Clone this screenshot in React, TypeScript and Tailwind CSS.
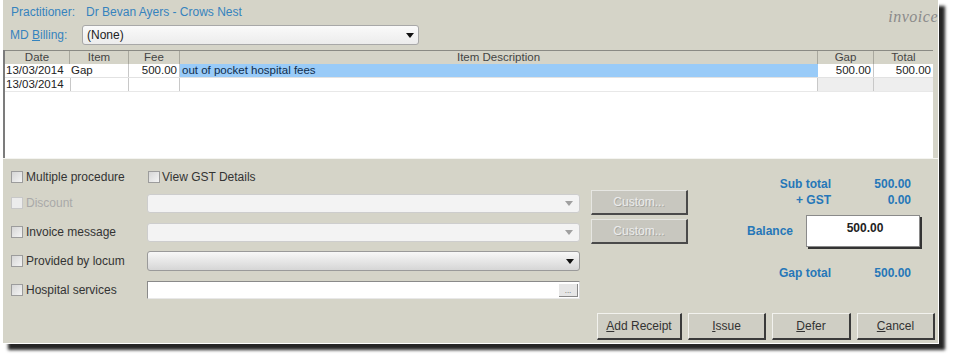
import React from "react";

function Check({ disabled = false }: { disabled?: boolean }) {
  return (
    <span
      className={
        disabled
          ? "inline-block w-[12px] h-[12px] border border-[#c8c8c8] bg-[#ececec] shrink-0"
          : "inline-block w-[12px] h-[12px] border border-[#9c9c9c] bg-gradient-to-br from-[#d6d6d6] to-[#f4f4f4] shrink-0"
      }
    />
  );
}

function Arrow({ dark = false }: { dark?: boolean }) {
  return (
    <svg width="8" height="5" viewBox="0 0 8 5" className="shrink-0">
      <path d="M0 0 L8 0 L4 5 Z" fill={dark ? "#111" : "#a0a0a0"} />
    </svg>
  );
}

function Btn({ children, w }: { children: React.ReactNode; w: string }) {
  return (
    <div
      className={
        "h-[27px] flex items-center justify-center bg-[#cfcec4] border-t border-l border-[#f2f2ee] border-r-2 border-b-2 border-r-[#3a3a3a] border-b-[#3a3a3a] text-[#333] text-[12px] " +
        w
      }
    >
      {children}
    </div>
  );
}

export default function App() {
  return (
    <div className="w-[953px] h-[360px] bg-white font-['Liberation_Sans',Arial,sans-serif] text-[12px] leading-none overflow-hidden">
      <div className="ml-[2px] w-[937px] h-[344px] bg-[#d5d4c8] border-x border-b border-white shadow-[6px_6px_3px_rgba(0,0,0,0.85)] flex flex-col">
        {/* header */}
        <div className="h-[24px] flex items-center pl-[8px]">
          <span className="text-[#3583be]">Practitioner:</span>
          <span className="ml-[11px] text-[#3583be]">Dr Bevan Ayers - Crows Nest</span>
          <span className="ml-auto mt-[10px] font-['Liberation_Serif',serif] italic text-[16px] text-[#8a8a8a] tracking-[0.5px]">
            invoice
          </span>
        </div>

        {/* MD Billing */}
        <div className="h-[26px] flex items-start pt-[1px]">
          <div className="w-[79px] pl-[7px] h-[20px] flex items-center text-[#3583be]">
            MD&nbsp;<span className="underline">B</span>illing:
          </div>
          <div className="w-[337px] h-[20px] rounded-[3px] border border-[#a8a8a8] bg-gradient-to-b from-[#fafafa] to-[#ececec] flex items-center pl-[4px] pr-[4px] text-[#222]">
            <span>(None)</span>
            <span className="ml-auto">
              <Arrow dark />
            </span>
          </div>
        </div>

        {/* Table */}
        <div className="h-[108px] w-[930px] border-l-2 border-[#7c7c7c] bg-white flex flex-col">
          <div className="h-[14px] flex bg-[#d5d4c8] border-t border-[#8a8a84] text-[#444] text-[11.5px]">
            <div className="w-[65px] border-r border-[#a9a89e] flex items-center justify-center">Date</div>
            <div className="w-[59px] border-r border-[#a9a89e] flex items-center justify-center">Item</div>
            <div className="w-[51px] border-r border-[#a9a89e] flex items-center justify-center">Fee</div>
            <div className="w-[638px] border-r border-[#a9a89e] flex items-center justify-center">Item Description</div>
            <div className="w-[56px] border-r border-[#a9a89e] flex items-center justify-center">Gap</div>
            <div className="w-[59px] flex items-center justify-center">Total</div>
          </div>
          <div className="h-[14px] flex text-[#222] text-[11.5px] border-b border-[#e2e2e2]">
            <div className="w-[65px] flex items-center pl-[1px] whitespace-nowrap">13/03/2014</div>
            <div className="w-[59px] border-r border-[#c8c8c8] flex items-center pl-[1px]">Gap</div>
            <div className="w-[51px] border-r border-[#c8c8c8] flex items-center justify-end pr-[2px]">500.00</div>
            <div className="w-[638px] bg-[#99cbf8] flex items-center pl-[2px] text-[#0f2d4d]">out of pocket hospital fees</div>
            <div className="w-[56px] border-r border-[#c8c8c8] flex items-center justify-end pr-[2px]">500.00</div>
            <div className="w-[59px] flex items-center justify-end pr-[2px]">500.00</div>
          </div>
          <div className="h-[14px] flex text-[#222] text-[11.5px] border-b border-[#e8e8e8]">
            <div className="w-[65px] flex items-center pl-[1px] whitespace-nowrap">13/03/2014</div>
            <div className="w-[59px] border-r border-l border-[#c8c8c8] flex items-center" />
            <div className="w-[51px] border-r border-[#c8c8c8]" />
            <div className="w-[638px] border-r border-[#c8c8c8]" />
            <div className="w-[56px] border-r border-[#c8c8c8] bg-[#eeeeee]" />
            <div className="w-[59px] bg-[#eeeeee]" />
          </div>
        </div>

        {/* bottom area */}
        <div className="h-[155px] flex border-t border-[#f4f4f0]">
          {/* left column */}
          <div className="w-[577px] pl-[8px] pt-[8px] flex flex-col text-[#333]">
            <div className="h-[20px] flex items-center">
              <div className="w-[137px] flex items-center gap-[3px]">
                <Check />
                <span>Multiple procedure</span>
              </div>
              <div className="flex items-center gap-[2px]">
                <Check />
                <span>View GST Details</span>
              </div>
            </div>
            <div className="h-[20px] mt-[6px] flex items-center">
              <div className="w-[136px] flex items-center gap-[3px] text-[#a9a9a9]">
                <Check disabled />
                <span>Discount</span>
              </div>
              <div className="w-[433px] h-[19px] rounded-[3px] border border-[#cdcdcd] bg-[#f3f3f3] flex items-center justify-end pr-[6px]">
                <Arrow />
              </div>
            </div>
            <div className="h-[20px] mt-[9px] flex items-center">
              <div className="w-[136px] flex items-center gap-[3px]">
                <Check />
                <span>Invoice message</span>
              </div>
              <div className="w-[433px] h-[19px] rounded-[3px] border border-[#cdcdcd] bg-[#f3f3f3] flex items-center justify-end pr-[6px]">
                <Arrow />
              </div>
            </div>
            <div className="h-[20px] mt-[9px] flex items-center">
              <div className="w-[136px] flex items-center gap-[3px]">
                <Check />
                <span>Provided by locum</span>
              </div>
              <div className="w-[433px] h-[20px] rounded-[3px] border border-[#9a9a9a] bg-gradient-to-b from-[#f8f8f8] to-[#d6d6d6] flex items-center justify-end pr-[5px]">
                <Arrow dark />
              </div>
            </div>
            <div className="h-[20px] mt-[9px] flex items-center">
              <div className="w-[136px] flex items-center gap-[3px]">
                <Check />
                <span>Hospital services</span>
              </div>
              <div className="w-[433px] h-[18px] border-t border-l border-[#8a8a8a] border-r border-b border-r-[#d8d8d8] border-b-[#e8e8e8] bg-white flex items-end justify-end pr-[1px] pb-[1px]">
                <div className="w-[19px] h-[13px] bg-[#e6e6e6] border-r border-b border-[#888] flex items-end justify-center text-[8px] text-[#666] leading-none pb-[1px]">
                  ...
                </div>
              </div>
            </div>
          </div>

          {/* custom buttons */}
          <div className="ml-[11px] w-[97px] pt-[31px] flex flex-col gap-[4px]">
            {[0, 1].map((i) => (
              <div
                key={i}
                className="h-[25px] bg-[#c8c7bf] border-t border-l border-[#e6e6e2] border-r-2 border-b-2 border-r-[#4a4a4a] border-b-[#4a4a4a] flex items-center justify-center text-[12px] text-[#ececec] [text-shadow:1px_1px_0_#a6a6a0]"
              >
                Custom...
              </div>
            ))}
          </div>

          {/* totals */}
          <div className="w-[249px] pt-[17px] flex flex-col font-bold text-[#2677b8]">
            <div className="h-[16px] flex items-center">
              <div className="w-[143px] text-right">Sub total</div>
              <div className="w-[80px] text-right">500.00</div>
            </div>
            <div className="h-[16px] flex items-center">
              <div className="w-[143px] text-right">+ GST</div>
              <div className="w-[80px] text-right">0.00</div>
            </div>
            <div className="h-[32px] mt-[7px] flex items-center">
              <div className="w-[105px] text-right">Balance</div>
              <div className="ml-[13px] w-[114px] h-[32px] bg-white border border-[#8a8a8a] shadow-[2px_2px_0_#333] flex justify-center pt-[6px] text-[#222] pl-[4px]">
                500.00
              </div>
            </div>
            <div className="h-[16px] mt-[18px] flex items-center">
              <div className="w-[143px] text-right">Gap total</div>
              <div className="w-[80px] text-right">500.00</div>
            </div>
          </div>
        </div>

        {/* buttons row */}
        <div className="h-[27px] flex justify-end pr-[3px] gap-[6px]">
          <Btn w="w-[85px]">
            <span>
              <span className="underline">A</span>dd Receipt
            </span>
          </Btn>
          <Btn w="w-[78px]">
            <span>
              <span className="underline">I</span>ssue
            </span>
          </Btn>
          <Btn w="w-[79px]">
            <span>
              <span className="underline">D</span>efer
            </span>
          </Btn>
          <Btn w="w-[78px]">
            <span>
              <span className="underline">C</span>ancel
            </span>
          </Btn>
        </div>
      </div>
    </div>
  );
}
